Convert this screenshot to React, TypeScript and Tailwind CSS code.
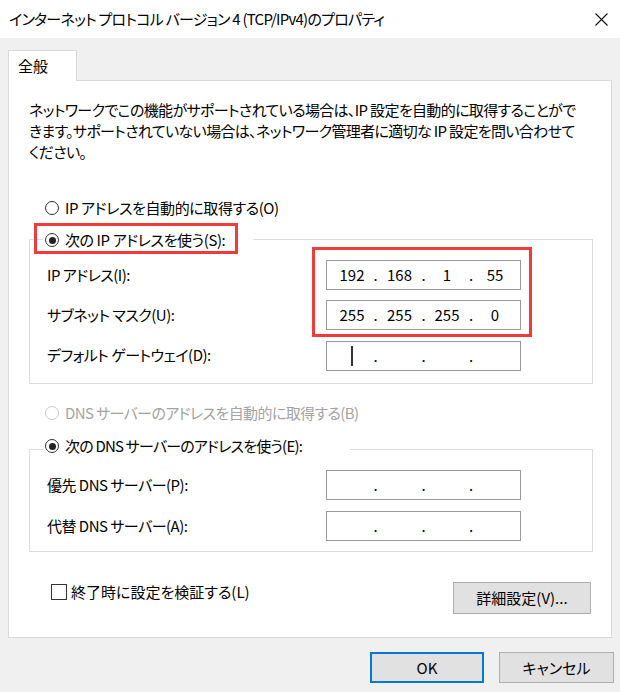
import React from "react";

const Radio = ({ checked, disabled }: { checked?: boolean; disabled?: boolean }) => (
  <span
    className={
      disabled
        ? "w-[14px] h-[14px] shrink-0 rounded-full border border-[#c8c8c8] bg-white flex items-center justify-center"
        : "w-[14px] h-[14px] shrink-0 rounded-full border border-[#333333] bg-white flex items-center justify-center"
    }
  >
    {checked && <span className="w-[7px] h-[7px] rounded-full bg-[#222222]" />}
  </span>
);

const Dot = () => <span className="text-center">.</span>;

const IpBox = ({ values, cursor }: { values?: string[]; cursor?: boolean }) => {
  const v = values ?? ["", "", "", ""];
  return (
    <div className="w-[195px] h-[30px] border border-[#9a9a9a] bg-white grid grid-cols-[38px_9px_39px_9px_38px_10px_38px] pl-[6px] items-center leading-[20px]">
      <span className="text-center flex justify-center">
        {cursor ? <span className="w-[2px] h-[20px] bg-[#333333]" /> : v[0]}
      </span>
      <Dot />
      <span className="text-center">{v[1]}</span>
      <Dot />
      <span className="text-center">{v[2]}</span>
      <Dot />
      <span className="text-center">{v[3]}</span>
    </div>
  );
};

const Label = ({ children }: { children: React.ReactNode }) => (
  <div className="h-[30px] flex items-center whitespace-nowrap tracking-[-0.5px]">{children}</div>
);

export default function App() {
  return (
    <div className="w-[620px] h-[692px] overflow-hidden bg-white text-[15px] text-black font-['Noto_Sans_CJK_JP',sans-serif] [font-feature-settings:'palt']">
      {/* Title bar */}
      <div className="h-[38px] bg-white flex items-center justify-between pl-[9px] pr-[12px]">
        <span className="whitespace-nowrap leading-[20px] tracking-[-0.75px]">インターネット プロトコル バージョン 4 (TCP/IPv4)のプロパティ</span>
        <svg width="13" height="13" viewBox="0 0 13 13" className="mt-[1px]">
          <path d="M0.5 0.5 L12.5 12.5 M12.5 0.5 L0.5 12.5" stroke="#111" strokeWidth="1.1" fill="none" />
        </svg>
      </div>

      {/* Body */}
      <div className="bg-[#f0f0f0] h-[654px] px-[8px] pt-[12px]">
        <div className="relative z-10 -mb-px w-[69px] h-[31px] border border-b-0 border-[#d9d9d9] bg-white pl-[9px] flex items-center leading-[20px]">
          全般
        </div>
        <div className="w-[604px] border border-[#d9d9d9] bg-white pl-[20px] pr-[18px] pt-[18px] pb-[23px]">
          <p className="leading-[21px] whitespace-nowrap tracking-[-0.65px]">
            ネットワークでこの機能がサポートされている場合は、IP 設定を自動的に取得することがで
            <br />
            きます。サポートされていない場合は、ネットワーク管理者に適切な IP 設定を問い合わせて
            <br />
            ください。
          </p>

          <div className="mt-[36px] ml-[16px] h-[20px] flex items-center gap-[6px] leading-[20px] tracking-[-0.4px]">
            <Radio />
            <span>IP アドレスを自動的に取得する(O)</span>
          </div>

          {/* Group 1 */}
          <div className="mt-[21px] border border-[#dcdcdc] pb-[12px]">
            <div className="relative -mt-[10px] ml-[13px] w-[210px] h-[20px] bg-white pl-[2px] flex items-center gap-[6px] leading-[20px] tracking-[-0.4px]">
              <Radio checked />
              <span>次の IP アドレスを使う(S):</span>
              <div className="absolute left-[-9px] top-[-7px] w-[204px] h-[31px] border-[3px] border-[#ef3b3b]" />
            </div>
            <div className="mt-[10px] pl-[17px] flex">
              <div className="w-[279px] flex flex-col gap-[10px]">
                <Label>IP アドレス(I):</Label>
                <Label>サブネット マスク(U):</Label>
                <Label>デフォルト ゲートウェイ(D):</Label>
              </div>
              <div className="flex flex-col gap-[10px]">
                <div className="relative flex flex-col gap-[10px]">
                  <IpBox values={["192", "168", "1", "55"]} />
                  <IpBox values={["255", "255", "255", "0"]} />
                  <div className="absolute left-[-14px] top-[-13px] w-[220px] h-[90px] border-[3px] border-[#ef3b3b]" />
                </div>
                <div className="mt-[1px]">
                  <IpBox cursor />
                </div>
              </div>
            </div>
          </div>

          <div className="mt-[19px] ml-[16px] h-[20px] flex items-center gap-[6px] leading-[20px] text-[#a3a3a3] tracking-[-0.6px]">
            <Radio disabled />
            <span>DNS サーバーのアドレスを自動的に取得する(B)</span>
          </div>

          {/* Group 2 */}
          <div className="mt-[26px] border border-[#dcdcdc] pb-[10px]">
            <div className="-mt-[14px] ml-[13px] w-[307px] h-[20px] bg-white pl-[2px] flex items-center gap-[6px] leading-[20px] tracking-[-0.8px]">
              <Radio checked />
              <span>次の DNS サーバーのアドレスを使う(E):</span>
            </div>
            <div className="mt-[14px] pl-[17px] flex">
              <div className="w-[279px] flex flex-col gap-[11px]">
                <Label>優先 DNS サーバー(P):</Label>
                <Label>代替 DNS サーバー(A):</Label>
              </div>
              <div className="flex flex-col gap-[11px]">
                <IpBox />
                <IpBox />
              </div>
            </div>
          </div>

          <div className="mt-[30px] flex items-start justify-between">
            <div className="ml-[22px] h-[20px] flex items-center gap-[4px] leading-[20px]">
              <span className="w-[16px] h-[16px] border border-[#333333] bg-white" />
              <span>終了時に設定を検証する(L)</span>
            </div>
            <button className="mr-[2px] w-[138px] h-[32px] border border-[#adadad] bg-[#e1e1e1] flex items-center justify-center leading-[20px]">
              詳細設定(V)...
            </button>
          </div>
        </div>

        <div className="mt-[14px] flex justify-end gap-[15px] mr-[-2px]">
          <button className="w-[114px] h-[31px] border-2 border-[#0078d7] bg-[#e1e1e1] flex items-center justify-center leading-[20px]">
            OK
          </button>
          <button className="w-[115px] h-[31px] border border-[#adadad] bg-[#e1e1e1] flex items-center justify-center leading-[20px]">
            キャンセル
          </button>
        </div>
      </div>
    </div>
  );
}
